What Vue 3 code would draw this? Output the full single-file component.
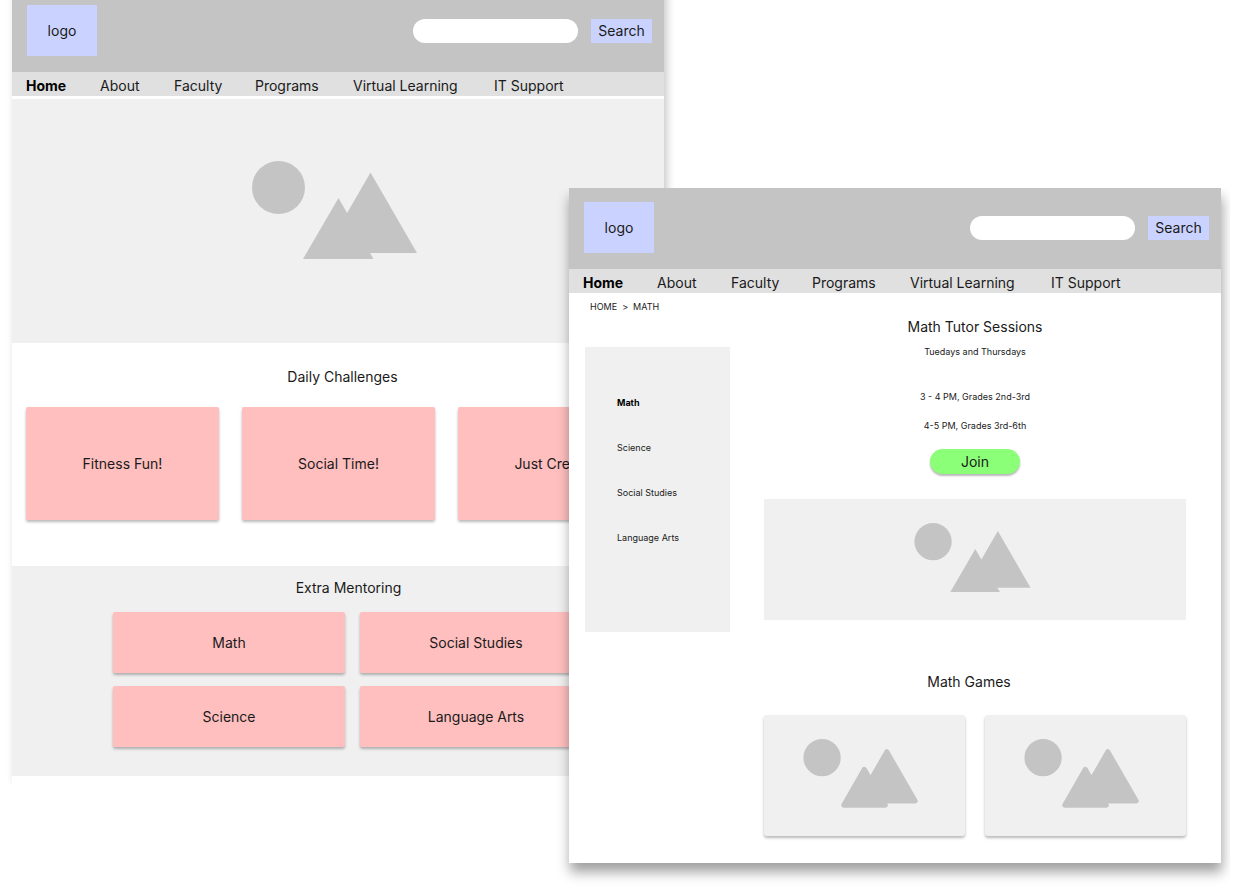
<script setup>
import { defineComponent, h } from 'vue'

const navItems = ['Home', 'About', 'Faculty', 'Programs', 'Virtual Learning', 'IT Support']
const challenges = ['Fitness Fun!', 'Social Time!', 'Just Create!']
const subjects = ['Math', 'Social Studies', 'Science', 'Language Arts']
const sideLinks = ['Math', 'Science', 'Social Studies', 'Language Arts']
const screens = ['home', 'math']

// Placeholder picture: a sun beside two overlapping mountains
const Placeholder = defineComponent({
  props: { rounded: Boolean },
  setup(props) {
    return () =>
      h('svg', { viewBox: '0 0 165 98', fill: '#c4c4c4', 'aria-hidden': 'true' }, [
        h('circle', { cx: 26.5, cy: 26.5, r: 26.5 }),
        props.rounded
          ? h('path', {
              d: 'M86.5 43 L116.3 94 H57.2 Z M118.5 18 L158.8 88 H78.2 Z',
              stroke: '#c4c4c4',
              'stroke-width': 7,
              'stroke-linejoin': 'round'
            })
          : h('path', { d: 'M86.5 37 L121.5 98 H51 Z M118.5 11.5 L165 92 H72 Z' })
      ])
  }
})
</script>

<template>
  <div class="stage">
    <article v-for="screen in screens" :key="screen" class="screen" :class="screen">
      <header class="masthead">
        <a href="#" class="logo">logo</a>
        <form class="search" @submit.prevent>
          <input type="search" class="field" aria-label="Search" />
          <button type="submit" class="search-button">Search</button>
        </form>
      </header>
      <nav class="nav" aria-label="Main">
        <a v-for="item in navItems" :key="item" href="#" :class="{ current: item === 'Home' }">{{ item }}</a>
      </nav>

      <template v-if="screen === 'home'">
        <div class="hero"><Placeholder class="picture" /></div>
        <section class="daily">
          <h2>Daily Challenges</h2>
          <div class="daily-cards">
            <a v-for="name in challenges" :key="name" href="#" class="card">{{ name }}</a>
          </div>
        </section>
        <section class="mentoring">
          <h2>Extra Mentoring</h2>
          <div class="mentoring-cards">
            <a v-for="name in subjects" :key="name" href="#" class="card">{{ name }}</a>
          </div>
        </section>
      </template>

      <template v-else>
        <nav class="crumbs" aria-label="Breadcrumb">
          <a href="#">HOME</a><span>&gt;</span><a href="#">MATH</a>
        </nav>
        <div class="columns">
          <nav class="side" aria-label="Subjects">
            <a v-for="name in sideLinks" :key="name" href="#" :class="{ current: name === 'Math' }">{{ name }}</a>
          </nav>
          <main class="content">
            <h2>Math Tutor Sessions</h2>
            <p class="days">Tuedays and Thursdays</p>
            <p>3 - 4 PM, Grades 2nd-3rd</p>
            <p>4-5 PM, Grades 3rd-6th</p>
            <button type="button" class="join">Join</button>
            <div class="banner"><Placeholder class="picture" /></div>
            <h2 class="games-title">Math Games</h2>
            <div class="games">
              <a v-for="n in 2" :key="n" href="#" class="game" :aria-label="'Math game ' + n">
                <Placeholder class="picture" rounded />
              </a>
            </div>
          </main>
        </div>
      </template>
    </article>
  </div>
</template>

<style>
body {
  background: #fff;
}
</style>

<style scoped>
.stage {
  display: grid;
  grid-template-columns: 557fr 95fr 557fr;
  align-items: start;
  padding: 0 13px 24px 12px;
  overflow: hidden;
  font: 14px/20px Inter, "Open Sans", sans-serif;
  color: #1a1a1a;
}
.stage * {
  box-sizing: border-box;
}
a {
  color: inherit;
  text-decoration: none;
}
h2,
p {
  margin: 0;
  font-weight: 400;
  text-align: center;
}
h2 {
  font-size: 14px;
  line-height: 20px;
}
button,
input {
  border: 0;
  padding: 0;
  font: inherit;
  color: inherit;
}
.screen {
  grid-row: 1;
  background: #fff;
}
.home {
  grid-column: 1 / 3;
  margin-top: -9px;
  padding-bottom: 8px;
  box-shadow: 3px 0 8px rgba(0, 0, 0, 0.22);
  clip-path: inset(0 -12px 0 -12px);
}
.math {
  grid-column: 2 / 4;
  margin-top: 188px;
  padding-bottom: 27px;
  box-shadow: 1px 9px 12px rgba(0, 0, 0, 0.38);
  clip-path: inset(0 -9px -24px -12px);
}

.masthead {
  display: flex;
  align-items: center;
  justify-content: space-between;
  padding: 14px 12px 16px 15px;
  background: #c4c4c4;
}
.logo {
  display: flex;
  align-items: center;
  justify-content: center;
  width: 70px;
  height: 51px;
  background: #cad3ff;
}
.search {
  display: flex;
  gap: 13px;
}
.field {
  width: 165px;
  height: 24px;
  padding: 0 12px;
  border-radius: 12px;
  background: #fff;
}
.search-button {
  width: 61px;
  height: 24px;
  background: #cad3ff;
}
.nav {
  display: grid;
  grid-template-columns: 74fr 74fr 81fr 98fr 141fr 170fr;
  padding: 4px 0 0 14px;
  background: #e0e0e0;
  white-space: nowrap;
}
.current {
  font-weight: 700;
  color: #000;
}

.hero {
  display: flex;
  justify-content: center;
  margin-top: 3px;
  padding: 62px 8px 84px 0;
  background: #f0f0f0;
}
.hero .picture {
  width: 165px;
  height: 98px;
}
.daily {
  padding: 24px 13px 46px 14px;
}
.daily h2 {
  padding-left: 8px;
}
.daily-cards {
  display: grid;
  grid-template-columns: repeat(3, 1fr);
  gap: 23px;
  margin-top: 20px;
}
.card {
  display: flex;
  align-items: center;
  justify-content: center;
  border-radius: 2px;
  background: #ffbfbf;
  box-shadow: 0 2px 3px rgba(0, 0, 0, 0.28);
}
.daily .card {
  height: 113px;
}
.mentoring {
  padding: 12px 72px 29px 101px;
  background: #f0f0f0;
}
.mentoring h2 {
  padding-right: 8px;
}
.mentoring-cards {
  display: grid;
  grid-template-columns: 1fr 1fr;
  gap: 13px 15px;
  margin-top: 14px;
}
.mentoring .card {
  height: 61px;
}

.crumbs {
  display: flex;
  gap: 5px;
  padding: 6px 21px 0;
  font-size: 9px;
  line-height: 16px;
}
.columns {
  display: grid;
  grid-template-columns: 145fr 422fr;
  gap: 34px;
  align-items: start;
  padding: 2px 35px 0 16px;
}
.side {
  display: flex;
  flex-direction: column;
  gap: 29px;
  min-height: 285px;
  margin-top: 30px;
  padding: 48px 12px 40px 32px;
  background: #f0f0f0;
  font-size: 9px;
  line-height: 16px;
}
.content {
  display: flex;
  flex-direction: column;
}
.content p {
  margin-bottom: 13px;
  font-size: 9px;
  line-height: 16px;
}
.content .days {
  margin: 7px 0 29px;
}
.join {
  align-self: center;
  width: 90px;
  height: 25px;
  margin: 2px 0 25px;
  border-radius: 13px;
  background: #8cff78;
  box-shadow: 0 2px 2px rgba(0, 0, 0, 0.28);
}
.banner,
.game {
  display: flex;
  justify-content: center;
  padding: 24px 6px 28px 0;
  background: #f0f0f0;
}
.banner .picture,
.game .picture {
  width: 117px;
  height: 69px;
}
.banner {
  margin-bottom: 52px;
}
.games-title {
  padding-right: 12px;
}
.games {
  display: grid;
  grid-template-columns: 1fr 1fr;
  gap: 20px;
  margin-top: 23px;
}
.game {
  border-radius: 3px;
  box-shadow: 0 2px 3px rgba(0, 0, 0, 0.28);
}
</style>
